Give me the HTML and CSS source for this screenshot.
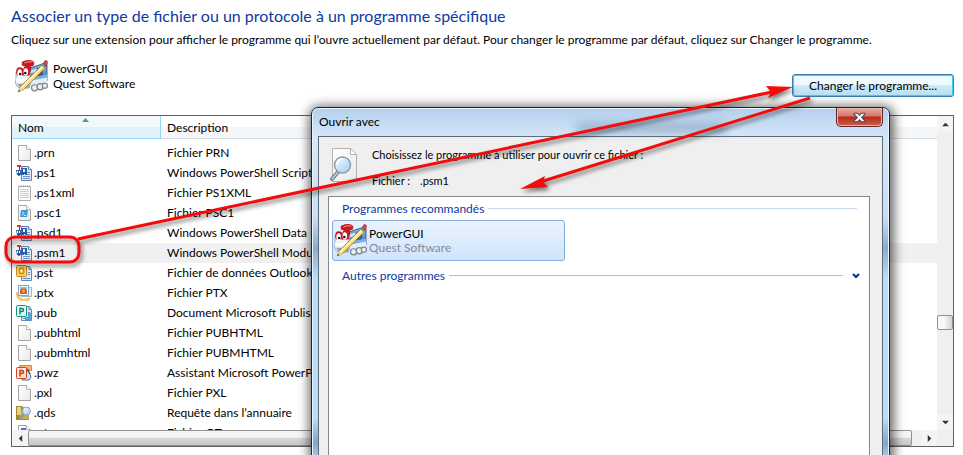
FILE: index.html
```html
<!DOCTYPE html>
<html lang="fr">
<head>
<meta charset="utf-8">
<title>Associer un type de fichier</title>
<link rel="stylesheet" href="styles.css">
</head>
<body>
<svg class="sprites" aria-hidden="true">
  <defs>
    <linearGradient id="sheet" x1="0" y1="0" x2="1" y2="1"><stop offset="0" stop-color="#fff"/><stop offset="1" stop-color="#e9e9e9"/></linearGradient>
    <linearGradient id="blue" x1="0" y1="0" x2="0" y2="1"><stop offset="0" stop-color="#8fb9e4"/><stop offset="1" stop-color="#2c61a6"/></linearGradient>
    <linearGradient id="lens" x1="0" y1="0" x2="1" y2="1"><stop offset="0" stop-color="#f4fbff"/><stop offset="1" stop-color="#9fcdee"/></linearGradient>
    <symbol id="page" viewBox="0 0 16 16">
      <path d="M2.500.5h8l4 4v11h-12z" fill="url(#sheet)" stroke="#a5a5a5"/>
      <path d="M10.500.5v4h4" fill="#fff" stroke="#b5b5b5"/>
    </symbol>
    <symbol id="notes" viewBox="0 0 16 16">
      <path d="M2.500 1.500h12v14h-12z" fill="#fafafa" stroke="#b0b0b0"/>
      <path d="M4 4.500h9M4 6.500h9M4 8.500h9M4 10.500h9M4 12.500h9" stroke="#c9ced2"/>
      <path d="M3 1h12" stroke="#8b8b8b" stroke-dasharray="1 1"/>
    </symbol>
    <symbol id="console" viewBox="0 0 16 16">
      <use href="#page"/>
      <path d="M5 5h7l-1 7H4z" fill="#3c9ad6"/>
      <path d="M6 7l2 1.500-2 2M8 10.500h2" fill="none" stroke="#d9effb"/>
    </symbol>
    <symbol id="script" viewBox="0 0 16 16">
      <path d="M5.500 1.500h7l3 3v11h-10z" fill="#dfeaf7" stroke="#5d83b5"/>
      <path d="M12.500 1.500v3h3" fill="#fff" stroke="#5d83b5"/>
      <path d="M7 11.500h7M7 13.500h7M11 9.500h3M11 7.500h3" stroke="#6b97cf"/>
      <path d="M1 0h4v2H1z" fill="#e0323a"/><path d="M3 2h1v3H3z" fill="#b8161d"/>
      <path d="M0 5h5l1 5H1z" fill="#2d62aa"/><path d="M5 3h6v6H5z" fill="#2d62aa"/><path d="M7 4h2v3H7z" fill="#e4f0fb"/>
      <path d="M1 6h1v2H1zM3 6h1v2H3z" fill="#fff"/>
      <circle cx="3" cy="10" r="1" fill="#174785"/><circle cx="7" cy="9" r="1" fill="#174785"/><circle cx="10" cy="9" r="1" fill="#174785"/>
    </symbol>
    <symbol id="sheets" viewBox="0 0 16 16">
      <path d="M5.500 1.500h8l2 3v11h-10z" fill="#dceafa" stroke="#5e88bb"/>
      <path d="M13 1.500v3h2M12 7.500h2M12 9.500h2M7 13.500h7" fill="none" stroke="#5e88bb"/>
    </symbol>
    <symbol id="outlook" viewBox="0 0 16 16">
      <use href="#sheets"/>
      <rect x=".5" y=".5" width="10" height="11" rx="1" fill="#fbd778" stroke="#c28a16"/>
      <rect x="3.500" y="3.500" width="4" height="5" rx="1" fill="#fff" stroke="#d3940f" stroke-width="2"/>
    </symbol>
    <symbol id="photo" viewBox="0 0 16 16">
      <path d="M1.500 7a7 7 0 0 0 12 6" fill="none" stroke="#f8c568" stroke-width="3"/>
      <rect x="5.500" y="2.500" width="10" height="9" fill="#e6f2fc" stroke="#9dbbd8"/>
      <rect x="2.500" y=".5" width="10" height="10" fill="#f0f7fd" stroke="#79a6d2"/>
      <rect x="4" y="2" width="7" height="7" fill="#8cc0ee"/>
      <path d="M4 9V6l2-3 2 1 1-1 2 3v3z" fill="#e6541c"/><circle cx="7.500" cy="6" r="1.500" fill="#ffb11f"/>
    </symbol>
    <symbol id="publisher" viewBox="0 0 16 16">
      <use href="#sheets"/>
      <path d="M9 12h3V8h3v7H9z" fill="#55a6d6"/>
      <rect x=".5" y=".5" width="10" height="11" rx="1" fill="#e3f7f2" stroke="#15917b"/>
      <path d="M4 9.500V3.500h2q1.500 0 1.500 1.500T6 6.500H4" fill="none" stroke="#12856f" stroke-width="1.500"/>
    </symbol>
    <symbol id="powerpoint" viewBox="0 0 16 16">
      <path d="M3.500.5h12v5h-12z" fill="#f9b860" stroke="#d18b3a"/>
      <path d="M8 4h4l3 8-2 3H6z" fill="#d5e3f5" stroke="#4a6c9a"/>
      <path d="M9 2l5 7" stroke="#333"/>
      <rect x=".5" y="2.500" width="10" height="11" rx="1" fill="#fbe3d9" stroke="#d2441a"/>
      <path d="M4 11.500V5.500h2q1.500 0 1.500 1.500T6 8.500H4" fill="none" stroke="#cc3b12" stroke-width="1.500"/>
    </symbol>
    <symbol id="query" viewBox="0 0 16 16">
      <path d="M0 1h6l1 1h6v13H0z" fill="#a48b32"/><path d="M1 2h4v8H1z" fill="#e5d488"/><path d="M6 4h7v10H3z" fill="#c4ac55"/>
      <path d="M4 14l4-5" stroke="#8b9298" stroke-width="2"/>
      <circle cx="10.500" cy="6" r="4" fill="url(#lens)" stroke="#8da6b5"/>
    </symbol>
    <symbol id="media" viewBox="0 0 16 16">
      <use href="#page"/><path d="M5 3h5v5H5z" fill="#4977c5"/>
    </symbol>
    <symbol id="train" viewBox="0 0 32 32">
      <path d="M14 8l15-5 2 2v15l-16 4z" fill="url(#blue)" stroke="#3b659c"/>
      <path d="M15 10l14-4v3l-14 4z" fill="#cfe2f5"/><path d="M21 8l6-1v8l-6 2z" fill="#35587f"/>
      <path d="M15 17l16-3v4l-16 4z" fill="#7eaedf"/>
      <path d="M7 2q5-3 10-1 2 1 1 4l-3 1v5l-5 1V6L7 5z" fill="#d4161c" stroke="#a51018" stroke-width=".7"/>
      <path d="M9 3q4-2 8-1" stroke="#ff8d87" fill="none"/>
      <path d="M1 12q5-5 13-2l1 9-1 8-8 1q-7-3-5-9z" fill="#edf1f6" stroke="#a3b2c5"/>
      <path d="M1 12q0-5 3.500-5T8 10q0-4 3-4t4 5l-1 4H2z" fill="#c51c22"/>
      <ellipse cx="4.500" cy="12.500" rx="2.200" ry="3.500" fill="#fff"/>
      <ellipse cx="10.500" cy="11.500" rx="2.200" ry="3.500" fill="#fff"/>
      <circle cx="5" cy="13.500" r="1.200" fill="#111"/><circle cx="10" cy="12.500" r="1.200" fill="#111"/>
      <path d="M1 18q7 1 13-1v3q-7 3-13 1z" fill="#fff"/>
      <path d="M2 23h12v4H5z" fill="#8fa1b7"/>
      <path d="M15 20l16-3v4l-16 4z" fill="#e3edf7"/>
      <g fill="#eef1f4" stroke="#7d858e" stroke-width="1.200"><circle cx="19" cy="27" r="3"/><circle cx="24.500" cy="26" r="3"/><circle cx="29" cy="25" r="2.500"/></g>
      <path d="M5 26L27 4l3 3L8 29l-5 2z" fill="#f9df78" stroke="#9b7a34" stroke-width=".8"/>
      <path d="M6 27L27 6" stroke="#fff8c9" stroke-width="1.200"/>
      <path d="M28 3l1-2q3-1 2 3l-1 2z" fill="#d9505c" stroke="#a9364a"/><path d="M26 4l3 3" stroke="#5ba17a" stroke-width="2"/>
      <path d="M3 31l2-5 3 3z" fill="#f3d6a7"/><path d="M3 31l1-2 1 1z" fill="#222"/>
    </symbol>
    <symbol id="search-page" viewBox="0 0 32 36">
      <path d="M3.500 1.500h18l6 6v27h-24z" fill="url(#sheet)" stroke="#b1b1b1"/>
      <path d="M21.500 1.500v6h6z" fill="#fff" stroke="#b1b1b1"/>
      <path d="M9 25l-6 7" stroke="#737d86" stroke-width="4" stroke-linecap="round"/>
      <path d="M9 25l-6 7" stroke="#c9d1d8" stroke-width="1.500" stroke-linecap="round"/>
      <circle cx="13.500" cy="18" r="8" fill="url(#lens)" stroke="#8b9caa" stroke-width="1.500"/>
      <path d="M8 18q0-6 6-6" fill="none" stroke="#fff" stroke-width="1.500"/>
    </symbol>
  </defs>
</svg>

<main class="page">
  <h1>Associer un type de fichier ou un protocole à un programme spécifique</h1>
  <p class="intro">Cliquez sur une extension pour afficher le programme qui l’ouvre actuellement par défaut. Pour changer le programme par défaut, cliquez sur Changer le programme.</p>
  <section class="current">
    <svg class="app-icon"><use href="#train"/></svg>
    <div class="app-text"><div>PowerGUI</div><div>Quest Software</div></div>
    <button class="change" type="button">Changer le programme...</button>
  </section>

  <section class="list">
    <div class="rows">
      <table>
        <thead><tr><th class="sorted" scope="col">Nom<svg class="sort" viewBox="0 0 7 4"><path d="M0 4l3.500-4L7 4z" fill="#5f8ba6"/></svg></th><th scope="col">Description</th></tr></thead>
        <tbody>
          <tr><td><svg class="file"><use href="#page"/></svg>.prn</td><td>Fichier PRN</td></tr>
          <tr><td><svg class="file"><use href="#script"/></svg>.ps1</td><td>Windows PowerShell Script</td></tr>
          <tr><td><svg class="file"><use href="#notes"/></svg>.ps1xml</td><td>Fichier PS1XML</td></tr>
          <tr><td><svg class="file"><use href="#console"/></svg>.psc1</td><td>Fichier PSC1</td></tr>
          <tr><td><svg class="file"><use href="#script"/></svg>.psd1</td><td>Windows PowerShell Data</td></tr>
          <tr class="selected"><td><svg class="file"><use href="#script"/></svg>.psm1</td><td>Windows PowerShell Module</td></tr>
          <tr><td><svg class="file"><use href="#outlook"/></svg>.pst</td><td>Fichier de données Outlook</td></tr>
          <tr><td><svg class="file"><use href="#photo"/></svg>.ptx</td><td>Fichier PTX</td></tr>
          <tr><td><svg class="file"><use href="#publisher"/></svg>.pub</td><td>Document Microsoft Publisher</td></tr>
          <tr><td><svg class="file"><use href="#page"/></svg>.pubhtml</td><td>Fichier PUBHTML</td></tr>
          <tr><td><svg class="file"><use href="#page"/></svg>.pubmhtml</td><td>Fichier PUBMHTML</td></tr>
          <tr><td><svg class="file"><use href="#powerpoint"/></svg>.pwz</td><td>Assistant Microsoft PowerPoint</td></tr>
          <tr><td><svg class="file"><use href="#page"/></svg>.pxl</td><td>Fichier PXL</td></tr>
          <tr><td><svg class="file"><use href="#query"/></svg>.qds</td><td>Requête dans l’annuaire</td></tr>
          <tr><td><svg class="file"><use href="#media"/></svg>.qt</td><td>Fichier QT</td></tr>
        </tbody>
      </table>
    </div>
    <div class="vbar">
      <button type="button" aria-label="Défiler vers le haut"><svg viewBox="0 0 8 8"><path d="M0 6l4-4 4 4z"/></svg></button>
      <div class="vtrack"><div class="vthumb"></div></div>
      <button type="button" aria-label="Défiler vers le bas"><svg viewBox="0 0 8 8"><path d="M0 2l4 4 4-4z"/></svg></button>
    </div>
    <div class="hbar">
      <button type="button" aria-label="Défiler vers la gauche"><svg viewBox="0 0 8 8"><path d="M6 0L2 4l4 4z"/></svg></button>
      <div class="htrack"><div class="hthumb"></div></div>
      <button type="button" aria-label="Défiler vers la droite"><svg viewBox="0 0 8 8"><path d="M2 0l4 4-4 4z"/></svg></button>
    </div>
  </section>
</main>

<div class="dialog" role="dialog" aria-labelledby="dialog-title">
  <header class="titlebar">
    <span id="dialog-title">Ouvrir avec</span>
    <span class="glass-smudge"></span>
    <button class="close" type="button" aria-label="Fermer"><svg viewBox="0 0 12 10"><path d="M1 1h3l2 2 2-2h3v1L8 5l3 3v1H8L6 7 4 9H1V8l3-3-3-3z" fill="#fff" stroke="#5c4a52"/></svg></button>
  </header>
  <div class="dialog-body">
    <div class="prompt">
      <svg class="search-icon"><use href="#search-page"/></svg>
      <div class="prompt-text">
        <p>Choisissez le programme à utiliser pour ouvrir ce fichier :</p>
        <p class="filename"><span>Fichier :</span><span>.psm1</span></p>
      </div>
    </div>
    <div class="programs">
      <h2 class="group">Programmes recommandés</h2>
      <button class="program" type="button">
        <svg class="app-icon"><use href="#train"/></svg>
        <span class="program-text"><span>PowerGUI</span><span class="vendor">Quest Software</span></span>
      </button>
      <h2 class="group other">Autres programmes
        <svg class="chevron" viewBox="0 0 8 6"><path d="M1 1l3 3 3-3" fill="none" stroke="#0a2f9c" stroke-width="2"/></svg>
      </h2>
    </div>
  </div>
</div>

<svg class="annotations" viewBox="0 0 963 455" aria-hidden="true">
  <g fill="none" stroke="#f40b0b" stroke-width="3">
    <rect x="6" y="237" width="73" height="25" rx="9"/>
    <path d="M78 239L772 92M810 98L540 182"/>
  </g>
  <path d="M793 87l-27-1 5 6-3 6zM520 189l28-2-5-5 2-6z" fill="#f40b0b"/>
</svg>
</body>
</html>
```
FILE: styles.css
```css
* { box-sizing: border-box; }
body {
  margin: 0;
  height: 100vh;
  overflow: hidden;
  background: #fff;
  color: #000;
  font: 12px/16px Lato, "Open Sans", sans-serif;
}
h1, h2, p { margin: 0; font-weight: 400; }
button { font: inherit; color: inherit; padding: 0; margin: 0; border: 0; background: none; }
.sprites { position: absolute; width: 0; height: 0; }
.page {
  display: flex;
  flex-direction: column;
  height: 100%;
  padding: 4px 9px 8px 11px;
}
h1 { font-size: 16px; line-height: 24px; color: #0d3a9f; }
.intro { margin-top: 4px; white-space: nowrap; }
.current { display: flex; margin-top: 12px; height: 55px; padding-left: 4px; }
.app-icon { width: 33px; height: 33px; flex: none; }
.app-text { margin-left: 5px; line-height: 15px; padding-top: 1px; }
.change {
  width: 162px;
  height: 23px;
  margin: 14px 0 0 auto;
  border: 1px solid #3c7fb1;
  border-radius: 3px;
  background: linear-gradient(#f0f9fe 0 50%, #cfeaf8 50%, #b5dff5);
  box-shadow: inset 0 0 0 1px #3bd0f5;
}
.list {
  flex: 1;
  min-height: 0;
  display: grid;
  grid-template: minmax(0, 1fr) 16px / minmax(0, 1fr) 16px;
  border: 1px solid #5f6166;
  background: #efefef;
}
.rows { overflow: hidden; background: #fff; }
table { width: 100%; border-collapse: separate; border-spacing: 0; table-layout: fixed; }
th {
  height: 23px;
  padding: 2px 6px 0;
  border-bottom: 1px solid #d5dce2;
  background: linear-gradient(#fff 0 50%, #f5f6f7 50%);
  font-weight: 400;
  text-align: left;
}
th.sorted {
  position: relative;
  width: 149px;
  border-right: 1px solid #96d9f9;
  border-bottom-color: #96d9f9;
  background: linear-gradient(#f2f9fc 0 50%, #dff1f9 50%, #e2f2fa);
}
.sort { position: absolute; top: 2px; left: 70px; width: 7px; height: 4px; }
tbody::before { content: ""; display: block; height: 4px; }
td { height: 20px; padding: 0 6px; white-space: nowrap; }
td:first-child { padding-left: 4px; }
.selected td { background: #f0f0f0; }
.file { width: 16px; height: 16px; margin-right: 2px; vertical-align: middle; }
.vbar, .hbar { display: flex; background: #efefef; }
.vbar { flex-direction: column; }
.vbar button, .hbar button { width: 16px; height: 16px; flex: none; display: grid; place-items: center; background: #f4f4f4; }
.vbar svg, .hbar svg { width: 7px; height: 7px; fill: #333; }
.vtrack, .htrack { flex: 1; display: grid; }
.vtrack { grid-template-rows: 65% 15px; }
.vthumb { grid-row: 2; border: 1px solid #929292; border-radius: 2px; background: linear-gradient(90deg, #f7f7f7 45%, #d2d3d8); }
.hthumb { margin-right: 9px; border: 1px solid #929292; border-radius: 2px; background: linear-gradient(#f5f5f5 45%, #d8d8da 50%, #c8c8ca); }

.dialog {
  position: absolute;
  top: 107px;
  right: 73px;
  bottom: -10px;
  left: 311px;
  display: flex;
  flex-direction: column;
  padding: 0 6px;
  border: 1px solid #1b2430;
  border-radius: 7px;
  background: linear-gradient(#b4cfec, #d6e8f8 30px, #c8def3 110px, #8dabcd 140px, #bcdcf9 170px, #bcdcf9 310px, #86a4c4 335px, #bcdcf9);
  box-shadow: inset 0 0 0 1px #e8f5ff, 1px 2px 11px 3px rgba(0, 0, 0, .6);
}
.titlebar { display: flex; height: 28px; line-height: 28px; padding-left: 1px; }
.glass-smudge { width: 150px; height: 10px; margin: 15px auto 0 196px; background: #607d9d; opacity: .45; filter: blur(5px); }
.close {
  display: grid;
  place-items: center;
  width: 47px;
  height: 19px;
  border: 1px solid #5a2a2c;
  border-top: 0;
  border-radius: 0 0 5px 5px;
  background: linear-gradient(#e3aca4, #d4766a 45%, #b6281a 50%, #cf5f45);
  box-shadow: inset 0 0 0 1px #eab3aa;
}
.close svg { width: 13px; height: 11px; }
.dialog-body {
  flex: 1;
  min-height: 0;
  display: flex;
  flex-direction: column;
  padding: 0 12px 0 9px;
  border: 1px solid #5c6b7a;
  background: #efefef;
}
.prompt { display: flex; gap: 11px; height: 59px; padding-top: 10px; font-size: 11px; }
.search-icon { width: 32px; height: 36px; margin-left: 1px; flex: none; }
.prompt-text p + p { margin-top: 10px; }
.filename span + span { margin-left: 10px; }
.programs { flex: 1; padding: 0 3px; border: 1px solid #828790; background: #fff; }
.group {
  display: flex;
  align-items: center;
  gap: 4px;
  height: 23px;
  padding: 0 9px 0 10px;
  font-size: 12px;
  color: #0d3a9f;
}
.group::after { content: ""; flex: 1; height: 1px; background: #c8daec; }
.group.other { padding-right: 6px; margin-top: 3px; }
.other::after { background: #a3bfe6; }
.chevron { order: 2; width: 8px; height: 6px; margin-left: 5px; }
.program {
  display: flex;
  align-items: center;
  width: 233px;
  height: 41px;
  padding: 0 1px;
  border: 1px solid #84acdd;
  border-radius: 3px;
  background: linear-gradient(#eaf3fe, #cfe4fd);
  text-align: left;
  line-height: 14px;
}
.program-text { display: grid; margin-left: 2px; }
.vendor { color: #858b94; }
.annotations {
  position: absolute;
  top: 0;
  left: 0;
  width: 963px;
  height: 455px;
  pointer-events: none;
  filter: drop-shadow(2px 3px 2px rgba(0, 0, 0, .5));
}
```
